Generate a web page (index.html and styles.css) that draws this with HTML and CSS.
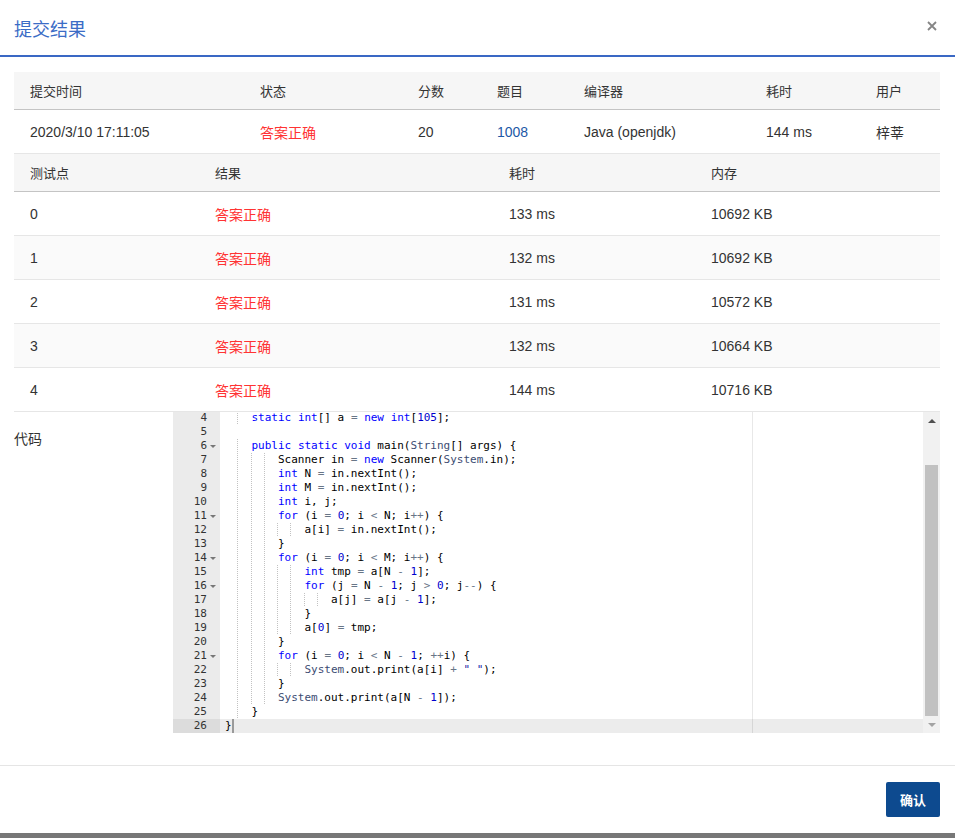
FILE: index.html
```html
<!DOCTYPE html>
<html lang="zh-CN">
<head>
<meta charset="utf-8">
<title>提交结果</title>
<link rel="stylesheet" href="styles.css">
</head>
<body>
<div class="modal">
  <div class="modal-header">
    <h3 class="modal-title">提交结果</h3>
    <button class="close" aria-label="关闭">
      <svg width="10" height="10" viewBox="0 0 10 10"><path d="M1 1L9 9M9 1L1 9" stroke="#858585" stroke-width="1.8" fill="none"/></svg>
    </button>
  </div>
  <div class="modal-body">
    <div class="grid g1">
      <div class="row head">
        <div>提交时间</div><div>状态</div><div>分数</div><div>题目</div><div>编译器</div><div>耗时</div><div>用户</div>
      </div>
      <div class="row">
        <div>2020/3/10 17:11:05</div><div class="ok">答案正确</div><div>20</div><div><a class="link" href="#">1008</a></div><div>Java (openjdk)</div><div>144 ms</div><div>梓莘</div>
      </div>
    </div>
    <div class="grid g2">
      <div class="row head">
        <div>测试点</div><div>结果</div><div>耗时</div><div>内存</div>
      </div>
      <div class="row"><div>0</div><div class="ok">答案正确</div><div>133 ms</div><div>10692 KB</div></div>
      <div class="row alt"><div>1</div><div class="ok">答案正确</div><div>132 ms</div><div>10692 KB</div></div>
      <div class="row"><div>2</div><div class="ok">答案正确</div><div>131 ms</div><div>10572 KB</div></div>
      <div class="row alt"><div>3</div><div class="ok">答案正确</div><div>132 ms</div><div>10664 KB</div></div>
      <div class="row"><div>4</div><div class="ok">答案正确</div><div>144 ms</div><div>10716 KB</div></div>
    </div>
    <div class="code-row">
      <div class="code-label">代码</div>
      <div class="editor">
        <div class="gutter">
          <div class="gl">
            <div class="gc">4<span class="fw"></span></div>
            <div class="gc">5<span class="fw"></span></div>
            <div class="gc">6<span class="fw"><i class="tri"></i></span></div>
            <div class="gc">7<span class="fw"></span></div>
            <div class="gc">8<span class="fw"></span></div>
            <div class="gc">9<span class="fw"></span></div>
            <div class="gc">10<span class="fw"></span></div>
            <div class="gc">11<span class="fw"><i class="tri"></i></span></div>
            <div class="gc">12<span class="fw"></span></div>
            <div class="gc">13<span class="fw"></span></div>
            <div class="gc">14<span class="fw"><i class="tri"></i></span></div>
            <div class="gc">15<span class="fw"></span></div>
            <div class="gc">16<span class="fw"><i class="tri"></i></span></div>
            <div class="gc">17<span class="fw"></span></div>
            <div class="gc">18<span class="fw"></span></div>
            <div class="gc">19<span class="fw"></span></div>
            <div class="gc">20<span class="fw"></span></div>
            <div class="gc">21<span class="fw"><i class="tri"></i></span></div>
            <div class="gc">22<span class="fw"></span></div>
            <div class="gc">23<span class="fw"></span></div>
            <div class="gc">24<span class="fw"></span></div>
            <div class="gc">25<span class="fw"></span></div>
            <div class="gc active">26<span class="fw"></span></div>
          </div>
        </div>
        <div class="content">
          <div class="lines">
<div class="ln"><span class="ig">  </span>  <span class="k">static</span> <span class="k">int</span>[] a <span class="o">=</span> <span class="k">new</span> <span class="k">int</span>[<span class="n">105</span>];</div>
<div class="ln"></div>
<div class="ln"><span class="ig">  </span>  <span class="k">public</span> <span class="k">static</span> <span class="k">void</span> main(<span class="s">String</span>[] args) {</div>
<div class="ln"><span class="ig">  </span><span class="ig">  </span><span class="ig">  </span>  Scanner in <span class="o">=</span> <span class="k">new</span> Scanner(<span class="s">System</span>.in);</div>
<div class="ln"><span class="ig">  </span><span class="ig">  </span><span class="ig">  </span>  <span class="k">int</span> N <span class="o">=</span> in.nextInt();</div>
<div class="ln"><span class="ig">  </span><span class="ig">  </span><span class="ig">  </span>  <span class="k">int</span> M <span class="o">=</span> in.nextInt();</div>
<div class="ln"><span class="ig">  </span><span class="ig">  </span><span class="ig">  </span>  <span class="k">int</span> i, j;</div>
<div class="ln"><span class="ig">  </span><span class="ig">  </span><span class="ig">  </span>  <span class="k">for</span> (i <span class="o">=</span> <span class="n">0</span>; i <span class="o">&lt;</span> N; i<span class="o">++</span>) {</div>
<div class="ln"><span class="ig">  </span><span class="ig">  </span><span class="ig">  </span><span class="ig">  </span><span class="ig">  </span>  a[i] <span class="o">=</span> in.nextInt();</div>
<div class="ln"><span class="ig">  </span><span class="ig">  </span><span class="ig">  </span>  }</div>
<div class="ln"><span class="ig">  </span><span class="ig">  </span><span class="ig">  </span>  <span class="k">for</span> (i <span class="o">=</span> <span class="n">0</span>; i <span class="o">&lt;</span> M; i<span class="o">++</span>) {</div>
<div class="ln"><span class="ig">  </span><span class="ig">  </span><span class="ig">  </span><span class="ig">  </span><span class="ig">  </span>  <span class="k">int</span> tmp <span class="o">=</span> a[N <span class="o">-</span> <span class="n">1</span>];</div>
<div class="ln"><span class="ig">  </span><span class="ig">  </span><span class="ig">  </span><span class="ig">  </span><span class="ig">  </span>  <span class="k">for</span> (j <span class="o">=</span> N <span class="o">-</span> <span class="n">1</span>; j <span class="o">&gt;</span> <span class="n">0</span>; j<span class="o">--</span>) {</div>
<div class="ln"><span class="ig">  </span><span class="ig">  </span><span class="ig">  </span><span class="ig">  </span><span class="ig">  </span><span class="ig">  </span><span class="ig">  </span>  a[j] <span class="o">=</span> a[j <span class="o">-</span> <span class="n">1</span>];</div>
<div class="ln"><span class="ig">  </span><span class="ig">  </span><span class="ig">  </span><span class="ig">  </span><span class="ig">  </span>  }</div>
<div class="ln"><span class="ig">  </span><span class="ig">  </span><span class="ig">  </span><span class="ig">  </span><span class="ig">  </span>  a[<span class="n">0</span>] <span class="o">=</span> tmp;</div>
<div class="ln"><span class="ig">  </span><span class="ig">  </span><span class="ig">  </span>  }</div>
<div class="ln"><span class="ig">  </span><span class="ig">  </span><span class="ig">  </span>  <span class="k">for</span> (i <span class="o">=</span> <span class="n">0</span>; i <span class="o">&lt;</span> N <span class="o">-</span> <span class="n">1</span>; <span class="o">++</span>i) {</div>
<div class="ln"><span class="ig">  </span><span class="ig">  </span><span class="ig">  </span><span class="ig">  </span><span class="ig">  </span>  <span class="s">System</span>.out.print(a[i] <span class="o">+</span> <span class="st">" "</span>);</div>
<div class="ln"><span class="ig">  </span><span class="ig">  </span><span class="ig">  </span>  }</div>
<div class="ln"><span class="ig">  </span><span class="ig">  </span><span class="ig">  </span>  <span class="s">System</span>.out.print(a[N <span class="o">-</span> <span class="n">1</span>]);</div>
<div class="ln"><span class="ig">  </span>  }</div>
<div class="ln active">}<span class="cursor"></span></div>
          </div>
        </div>
        <div class="vscroll">
          <div class="sb-btn"><i class="up"></i></div>
          <div class="sb-track"><div class="sb-thumb"></div></div>
          <div class="sb-btn"><i class="down"></i></div>
        </div>
      </div>
    </div>
  </div>
  <div class="modal-footer">
    <button class="btn-primary">确认</button>
  </div>
</div>
</body>
</html>
```
FILE: styles.css
```css
html, body {
  margin: 0;
  padding: 0;
}
body {
  background: #777777;
  font-family: "Liberation Sans", "Noto Sans CJK SC", sans-serif;
  color: #333;
}
.modal {
  width: 955px;
  height: 833px;
  background: #fff;
  display: flex;
  flex-direction: column;
}
.modal-header {
  height: 55px;
  border-bottom: 2px solid #3a68c4;
  display: flex;
  align-items: center;
  justify-content: space-between;
  padding: 0 18px 0 14px;
}
.modal-title {
  margin: 0;
  font-size: 18px;
  font-weight: normal;
  color: #3b6cc6;
  font-family: "Noto Sans CJK SC", sans-serif;
  line-height: 24px;
  padding-top: 0px;
}
.close {
  border: 0;
  background: none;
  padding: 0;
  width: 10px;
  height: 10px;
  display: flex;
  margin-top: -4px;
}
.modal-body {
  padding: 15px 15px 32px 14px;
}
.grid .row {
  display: grid;
  box-sizing: border-box;
  height: 44px;
  align-items: center;
  border-bottom: 1px solid #e6e6e6;
  font-size: 14px;
  color: #333;
}
.grid .row > div {
  padding-left: 16px;
  white-space: nowrap;
}
.grid .row.head {
  height: 38px;
  background: #f6f6f6;
  border-bottom: 1px solid #c4c4c4;
  font-size: 13px;
  color: #333;
}
.grid .row.alt {
  background: #fafafa;
}
.g1 .row {
  grid-template-columns: 230px 158px 79px 87px 182px 110px 1fr;
}
.g2 .row {
  grid-template-columns: 185px 294px 202px 1fr;
}
.ok {
  color: #ff3333;
}
.link {
  color: #1d58a6;
  text-decoration: none;
}
.code-row {
  display: flex;
}
.code-label {
  width: 159px;
  flex: none;
  font-size: 14px;
  line-height: 20px;
  padding-top: 17px;
  color: #333;
}
.editor {
  flex: 1;
  height: 321px;
  display: flex;
  overflow: hidden;
  font-family: "DejaVu Sans Mono", "Liberation Mono", monospace;
  font-size: 11px;
  line-height: 14px;
}
.gutter {
  width: 47px;
  flex: none;
  background: #ebebeb;
  color: #333;
}
.gl, .lines {
  margin-top: -1px;
}
.gc {
  height: 14px;
  display: flex;
  justify-content: flex-end;
  align-items: center;
}
.gc.active {
  background: #dcdcdc;
}
.fw {
  width: 11px;
  margin-right: 2px;
  height: 14px;
  display: flex;
  align-items: center;
  justify-content: center;
}
.tri {
  width: 0;
  height: 0;
  border-left: 3px solid transparent;
  border-right: 3px solid transparent;
  border-top: 3px solid #777;
  margin-top: 1px;
}
.content {
  flex: 1;
  background: linear-gradient(to right, transparent 532px, #e8e8e8 532px, #e8e8e8 533px, transparent 533px);
  color: #000;
}
.ln {
  height: 14px;
  white-space: pre;
  padding-left: 5px;
}
.ln.active {
  background: rgba(0, 0, 0, 0.075);
}
.ig {
  background: linear-gradient(#c2c2c2 50%, transparent 50%) right top / 1px 2px repeat-y;
}
.k { color: #0000ff; }
.s { color: #3c4c72; }
.n { color: #0000cd; }
.o { color: #687687; }
.st { color: #1a1aa6; }
.cursor {
  display: inline-block;
  width: 2px;
  height: 14px;
  background: #9a9a9a;
  vertical-align: top;
}
.vscroll {
  width: 17px;
  flex: none;
  background: #f1f1f1;
  display: flex;
  flex-direction: column;
}
.sb-btn {
  height: 17px;
  display: flex;
  align-items: center;
  justify-content: center;
}
.up {
  width: 0;
  height: 0;
  border-left: 4px solid transparent;
  border-right: 4px solid transparent;
  border-bottom: 4px solid #505050;
}
.down {
  width: 0;
  height: 0;
  border-left: 4px solid transparent;
  border-right: 4px solid transparent;
  border-top: 4px solid #a3a3a3;
}
.sb-track {
  flex: 1;
  display: flex;
  flex-direction: column;
  justify-content: flex-end;
  padding: 0 2px;
}
.sb-thumb {
  height: 251px;
  background: #c1c1c1;
}
.modal-footer {
  border-top: 1px solid #e5e5e5;
  padding: 16px 15px 16px;
  display: flex;
  justify-content: flex-end;
}
.btn-primary {
  width: 54px;
  height: 35px;
  border: 0;
  border-radius: 2px;
  background: #0d4a8f;
  color: #fff;
  font-family: "Noto Sans CJK SC", sans-serif;
  font-size: 13px;
  font-weight: bold;
  padding: 0;
}
```
